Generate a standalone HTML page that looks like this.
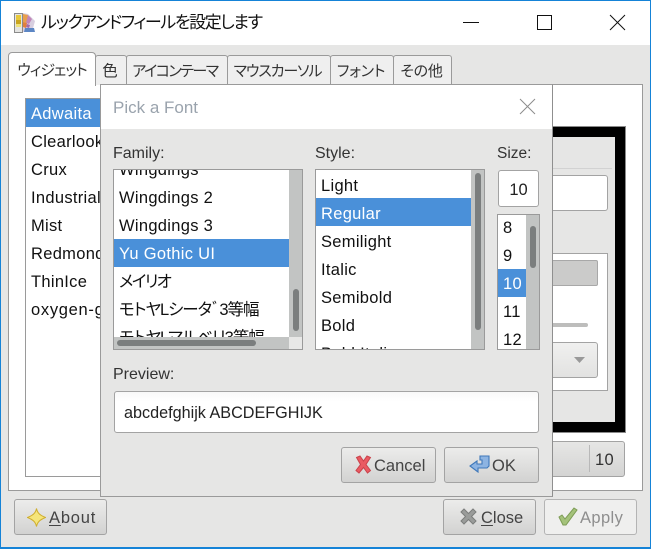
<!DOCTYPE html>
<html><head><meta charset="utf-8"><style>
html,body{margin:0;padding:0;background:#fff}
#w{position:relative;width:651px;height:549px;overflow:hidden;background:#e6e6e5;font-family:"Liberation Sans","Noto Sans CJK JP",sans-serif;font-size:16.5px;color:#111;font-feature-settings:"palt"}
#w div,#w svg{position:absolute;box-sizing:border-box}
.t{white-space:nowrap;line-height:30px;height:28px;letter-spacing:.3px}
.tab{top:55px;height:30px;background:#efefef;border:1px solid #9a9a9a;border-bottom:none;border-radius:3px 3px 0 0;text-align:center;line-height:32px;color:#333;font-size:15px;white-space:nowrap;padding-right:2px}
.box{background:#fff;border:1px solid #9a9a9a;overflow:hidden}
.sel{background:#4a90d9;color:#fff}
.btn{height:36px;border:1px solid #a3a3a3;border-radius:3px;background:linear-gradient(#ececeb,#d2d2d1);color:#333;line-height:37px;white-space:nowrap;font-size:16.5px}
.track{background:#c2c4c3}
.th{background:#7b7e7e;border-radius:3px}
.lbl{color:#333;white-space:nowrap;line-height:22px;height:22px;font-size:16px}
u{text-underline-offset:2px}
</style></head><body><div id="w">
<div style="left:0;top:0;width:651px;height:45px;background:#fff"></div>
<svg style="left:14px;top:12px" width="22" height="21" viewBox="0 0 22 21">
<path d="M9 1l5 1 7 7-3 11H8z" fill="#d8cfe0"/>
<path d="M9 2l5 1-1 8-4-1z" fill="#e8a04c"/><path d="M14 3l4 4-3 5-3-1z" fill="#c286b8"/><path d="M9 10l4 1-1 5-3-1z" fill="#e0803c"/><path d="M13 12l3 1-1 3-3-1z" fill="#a66aa8"/>
<path d="M11 16h9l1 4H10z" fill="#5c86c4"/>
<rect x="0.500" y="1.500" width="8" height="19" fill="#e4e4e2" stroke="#8a8a8a"/><rect x="2" y="3" width="5" height="5" fill="#e8c93a"/><rect x="2" y="8" width="5" height="4" fill="#c9a520"/><rect x="2" y="12" width="5" height="3" fill="#f0e27a"/>
</svg>
<div class="t" style="left:41px;top:8px;font-size:17px;letter-spacing:-1.4px;color:#111">ルックアンドフィールを設定します</div>
<svg style="left:460px;top:14px" width="170" height="18" viewBox="0 0 170 18" fill="none" stroke="#111" stroke-width="1">
<path d="M3 8.500H19"/><rect x="77.500" y="1.500" width="14" height="14"/><path d="M150 1L165 16M165 1L150 16"/></svg>

<div style="left:8px;top:84px;width:635px;height:407px;background:#fff;border:1px solid #9a9a9a"></div>
<div class="tab" style="left:95px;width:32px;font-size:15.5px">色</div>
<div class="tab" style="left:126px;width:102px;letter-spacing:-1.5px;padding-right:4px">アイコンテーマ</div>
<div class="tab" style="left:227px;width:104px;letter-spacing:-1.1px;padding-right:3px">マウスカーソル</div>
<div class="tab" style="left:330px;width:64px;letter-spacing:-.2px">フォント</div>
<div class="tab" style="left:393px;width:59px;letter-spacing:-.2px">その他</div>
<div class="tab" style="left:8px;top:52px;width:88px;height:34px;background:#fff;line-height:36px;z-index:2;border-radius:4px 4px 0 0;letter-spacing:-1px;padding-right:0">ウィジェット</div>
<div style="left:9px;top:84px;width:86px;height:2px;background:#fff;z-index:3"></div>

<div class="box" style="left:25px;top:98px;width:90px;height:379px">
<div class="t sel" style="left:0;top:0;width:90px;padding-left:5px">Adwaita</div>
<div class="t" style="left:5px;top:28px">Clearlooks</div>
<div class="t" style="left:5px;top:56px">Crux</div>
<div class="t" style="left:5px;top:84px">Industrial</div>
<div class="t" style="left:5px;top:112px">Mist</div>
<div class="t" style="left:5px;top:140px">Redmond</div>
<div class="t" style="left:5px;top:168px">ThinIce</div>
<div class="t" style="left:5px;top:196px;letter-spacing:.7px">oxygen-gtk</div>
</div>

<!-- right preview -->
<div style="left:540px;top:126px;width:86px;height:307px;background:#000;border:1px solid #8a8a8a"></div>
<div style="left:550px;top:137px;width:65px;height:285px;background:#e6e6e5"></div>
<div style="left:550px;top:168px;width:62px;height:1px;background:#d2d2d2"></div>
<div style="left:540px;top:175px;width:68px;height:36px;background:#fff;border:1px solid #a3a3a3;border-radius:3px"></div>
<div style="left:540px;top:253px;width:68px;height:138px;background:#fff;border:1px solid #a3a3a3"></div>
<div style="left:540px;top:260px;width:58px;height:26px;background:#cbcbca;border:1px solid #a8a8a8;border-radius:2px"></div>
<div style="left:540px;top:323px;width:48px;height:4px;background:#bdbdbc;border-radius:2px"></div>
<div style="left:540px;top:342px;width:58px;height:36px;background:linear-gradient(#f0f0ef,#e2e2e1);border:1px solid #a3a3a3;border-radius:3px"></div>
<svg style="left:573px;top:356px" width="14" height="8"><path d="M1 1H12L6.500 7z" fill="#999"/></svg>
<div style="left:540px;top:441px;width:85px;height:36px;background:linear-gradient(#e6e6e5,#d4d4d3);border:1px solid #a3a3a3;border-radius:3px"></div>
<div style="left:589px;top:445px;width:1px;height:27px;background:#b8b8b8"></div>
<div class="t" style="left:595px;top:445px;color:#333">10</div>

<!-- dialog -->
<div style="left:100px;top:84px;width:453px;height:413px;background:#e6e6e5;border:1px solid #9a9a9a;border-right-color:#8f8f8f;z-index:5">
<div style="left:0;top:0;width:451px;height:44px;background:#fff"></div>
<div class="t" style="left:12px;top:8px;color:#9aa3ad;font-size:17px;letter-spacing:0">Pick a Font</div>
<svg style="left:418px;top:13px" width="18" height="18" fill="none" stroke="#8c8c8c"><path d="M1 1L16 16M16 1L1 16"/></svg>

<div class="lbl" style="left:12px;top:58px">Family:</div>
<div class="lbl" style="left:214px;top:58px">Style:</div>
<div class="lbl" style="left:396px;top:58px;font-size:15.5px">Size:</div>

<div class="box" style="left:12px;top:84px;width:190px;height:181px">
<div class="t" style="left:5px;top:-15px">Wingdings</div>
<div class="t" style="left:5px;top:13px">Wingdings 2</div>
<div class="t" style="left:5px;top:41px">Wingdings 3</div>
<div class="t sel" style="left:0;top:69px;width:176px;padding-left:5px">Yu Gothic UI</div>
<div class="t" style="left:5px;top:97px;letter-spacing:-1.6px">メイリオ</div>
<div class="t" style="left:5px;top:125px;letter-spacing:-1px">モトヤLシータﾞ3等幅</div>
<div class="t" style="left:5px;top:153px;letter-spacing:-1px">モトヤLマルベリ3等幅</div>
<div class="track" style="left:175px;top:0;width:13px;height:167px"></div>
<div class="th" style="left:179px;top:119px;width:6px;height:42px"></div>
<div class="track" style="left:0;top:167px;width:175px;height:12px"></div>
<div style="left:175px;top:167px;width:13px;height:12px;background:#e8e8e7"></div>
<div class="th" style="left:3px;top:170px;width:139px;height:6px"></div>
</div>

<div class="box" style="left:214px;top:84px;width:170px;height:181px">
<div class="t" style="left:5px;top:1px">Light</div>
<div class="t sel" style="left:0;top:28px;width:155px;padding-left:5px;line-height:32px">Regular</div>
<div class="t" style="left:5px;top:57px">Semilight</div>
<div class="t" style="left:5px;top:85px">Italic</div>
<div class="t" style="left:5px;top:113px">Semibold</div>
<div class="t" style="left:5px;top:141px">Bold</div>
<div class="t" style="left:5px;top:169px">Bold Italic</div>
<div class="track" style="left:155px;top:0;width:13px;height:179px"></div>
<div class="th" style="left:159px;top:3px;width:6px;height:157px"></div>
</div>

<div style="left:397px;top:85px;width:41px;height:37px;background:#fff;border:1px solid #a3a3a3;border-radius:3px;text-align:center;line-height:38px;color:#222">10</div>

<div class="box" style="left:396px;top:129px;width:43px;height:136px">
<div class="t" style="left:5px;top:-2px">8</div>
<div class="t" style="left:5px;top:26px">9</div>
<div class="t sel" style="left:0;top:54px;width:28px;padding-left:5px">10</div>
<div class="t" style="left:5px;top:82px">11</div>
<div class="t" style="left:5px;top:110px">12</div>
<div class="track" style="left:28px;top:0;width:13px;height:134px"></div>
<div class="th" style="left:32px;top:11px;width:6px;height:42px"></div>
</div>

<div class="lbl" style="left:12px;top:279px">Preview:</div>
<div style="left:13px;top:306px;width:425px;height:42px;background:linear-gradient(#f8f8f8,#fff 25%);border:1px solid #a3a3a3;border-radius:3px;line-height:42px;padding-left:9px;color:#222;white-space:nowrap;font-size:16.2px">abcdefghijk ABCDEFGHIJK</div>

<div class="btn" style="left:240px;top:362px;width:95px">
<svg style="left:13px;top:7px" width="17" height="19" viewBox="0 0 17 19"><path d="M1.500 2.500L5 1l3.500 5L12 1l3.500 1.500L11 9.500l4.500 6-3 2.500-4-5.500L4 18l-3-2.500 4.500-6z" fill="#ea5a62" stroke="#c9434c" stroke-width="1"/></svg>
<div style="left:32px;top:0;color:#444">Cancel</div></div>
<div class="btn" style="left:343px;top:362px;width:95px">
<svg style="left:24px;top:7px" width="21" height="19" viewBox="0 0 21 19"><path d="M11 1h9v10l-2 2H9v4L1 11l7-5v3h5V5h-2z" fill="#8db4e2" stroke="#3f78ba" stroke-width="1.100"/></svg>
<div style="left:47px;top:0;color:#444">OK</div></div>
</div>

<!-- bottom buttons -->
<div class="btn" style="left:14px;top:499px;width:93px">
<svg style="left:12px;top:8px" width="19" height="19" viewBox="0 0 19 19"><path d="M9.500 .500C10.500 5 12.500 7 18.500 9.500 12.500 12 10.500 14 9.500 18.500 8.500 14 6.500 12 .500 9.500 6.500 7 8.500 5 9.500 .500z" fill="#f5e57a" stroke="#cfae2e"/></svg>
<div style="left:34px;top:0;color:#444;letter-spacing:.8px"><u>A</u>bout</div></div>
<div class="btn" style="left:443px;top:499px;width:93px">
<svg style="left:16px;top:8px" width="17" height="17" viewBox="0 0 17 17"><path d="M1 4l3-3 4.500 4.500L13 1l3 3-4.500 4.500L16 13l-3 3-4.500-4.500L4 16l-3-3 4.500-4.500z" fill="#9a9c9a" stroke="#7c7e7c"/></svg>
<div style="left:37px;top:0;color:#444"><u>C</u>lose</div></div>
<div class="btn" style="left:544px;top:499px;width:93px;background:#efefee;border-color:#b4b4b4">
<svg style="left:13px;top:7px" width="20" height="19" viewBox="0 0 20 19"><path d="M1 10l3-2 3 4L16 1l3 2L8 18H5z" fill="#a4c27a" stroke="#7d9c55"/></svg>
<div style="left:35px;top:0;color:#8e8e8e;letter-spacing:.4px">Apply</div></div>

<!-- window border -->
<div style="left:0;top:0;width:651px;height:549px;border:1px solid #1583d7;border-width:1px 1px 2px 1px;z-index:9"></div>
</div></body></html>
